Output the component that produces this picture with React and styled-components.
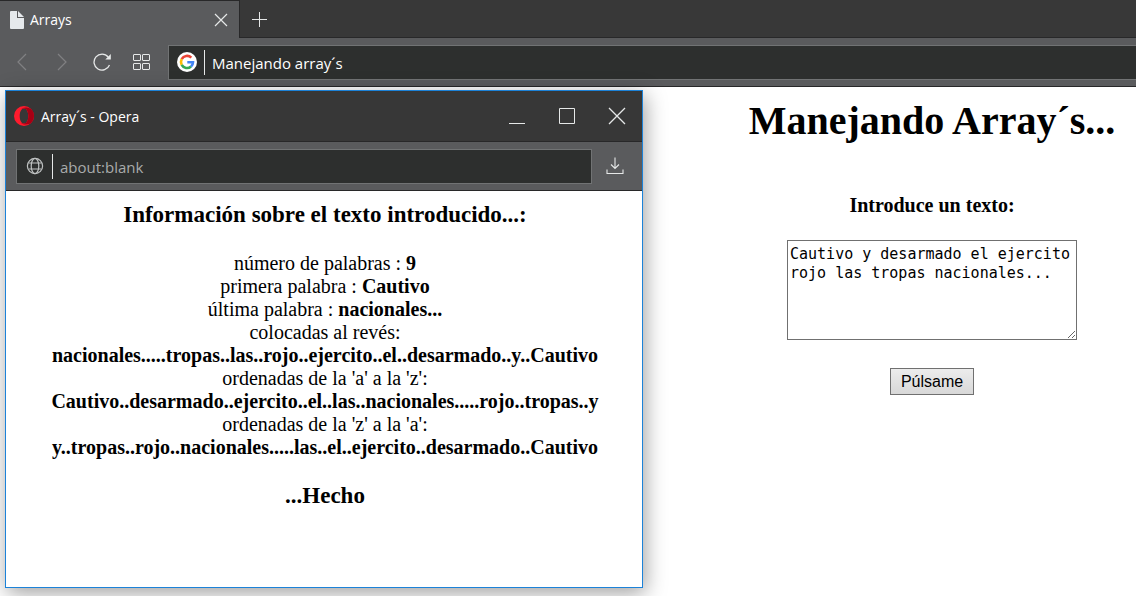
import React, { useState } from 'react';
import styled, { createGlobalStyle } from 'styled-components';

const GlobalStyle = createGlobalStyle`
  * { box-sizing: border-box; }
  body {
    margin: 0;
    background: #fff;
    color: #000;
    font-family: "Liberation Serif", "Times New Roman", serif;
    font-size: 20px;
    line-height: 23px;
  }
`;

const uiFont = '"Open Sans", "Noto Sans", sans-serif';

const Browser = styled.div`
  display: flex;
  flex-direction: column;
  min-height: 100vh;
  overflow: hidden;
`;

const TabStrip = styled.header`
  display: flex;
  height: 38px;
  background: #383838;
  border-bottom: 1px solid #282829;
  font-family: ${uiFont};
`;

const Tab = styled.div`
  display: flex;
  align-items: center;
  gap: 6px;
  width: 240px;
  height: 38px;
  padding: 0 11px 0 10px;
  background: #5a5b5d;
  border-top: 1px solid #282829;
  border-right: 1px solid #282829;
  color: #fff;
  font-size: 14px;
  line-height: 20px;
`;

const TabTitle = styled.span`
  flex: 1;
`;

const IconButton = styled.button`
  display: flex;
  align-items: center;
  justify-content: center;
  flex: none;
  width: ${(p) => p.$width || 20}px;
  height: ${(p) => p.$height || 20}px;
  padding: 0;
  border: 0;
  background: none;
  color: ${(p) => (p.$muted ? '#808183' : '#e6e8e8')};

  svg { display: block; }
`;

const Toolbar = styled.nav`
  display: flex;
  align-items: center;
  height: ${(p) => p.$height}px;
  padding-left: ${(p) => (p.$popup ? 10 : 2)}px;
  padding-right: ${(p) => (p.$popup ? 4 : 0)}px;
  background: #5a5b5d;
  border-bottom: 1px solid #282829;
`;

const Address = styled.label`
  display: flex;
  align-items: center;
  flex: 1;
  min-width: 0;
  height: 35px;
  margin-left: ${(p) => (p.$popup ? 0 : 6)}px;
  padding-left: ${(p) => (p.$popup ? 9 : 8)}px;
  background: #2d2f2e;
  border: 1px solid #717374;
  border-right-width: ${(p) => (p.$popup ? 1 : 0)}px;
`;

const AddressInput = styled.input`
  flex: 1;
  min-width: 0;
  height: 25px;
  margin-left: ${(p) => (p.$muted ? 8 : 7)}px;
  padding: 2px 0 0 7px;
  border: 0;
  border-left: 1px solid #e6e8e8;
  outline: 0;
  background: none;
  color: ${(p) => (p.$muted ? '#a9abab' : '#fff')};
  font: 15px/22px ${uiFont};
`;

const Viewport = styled.div`
  display: grid;
  grid-template-columns: minmax(0, 638fr) minmax(0, 408fr);
  column-gap: 85px;
  flex: 1;
  padding: 3px 0 8px 5px;
`;

const Popup = styled.section`
  display: flex;
  flex-direction: column;
  background: #fff;
  border: 1px solid #1c82d8;
  box-shadow: 2px 5px 20px rgba(0, 0, 0, 0.38);
`;

const TitleBar = styled.div`
  display: flex;
  align-items: center;
  height: 51px;
  padding: 0 0 0 8px;
  background: #373737;
  border-bottom: 1px solid #282829;
  color: #fff;
  font: 14px/20px ${uiFont};
`;

const WindowTitle = styled.span`
  flex: 1;
  margin-left: 7px;
  padding-top: 2px;
`;

const Report = styled.div`
  padding: 10px 7px 10px 9px;
  text-align: center;
`;

const ReportHeading = styled.h3`
  margin: 0;
  font-size: 23px;
  line-height: 28px;
`;

const ReportText = styled.p`
  margin: 23px 0;
`;

const Page = styled.main`
  display: flex;
  flex-direction: column;
  align-items: center;
  padding-top: 8px;
`;

const PageTitle = styled.h1`
  margin: 0 0 50px;
  font-size: 40px;
  line-height: 46px;
  white-space: nowrap;
`;

const Form = styled.form`
  display: flex;
  flex-direction: column;
  align-items: center;
`;

const FieldLabel = styled.label`
  margin-bottom: 23px;
  font-size: 20px;
  font-weight: bold;
`;

const TextArea = styled.textarea`
  width: 290px;
  height: 100px;
  margin: 0 0 28px;
  padding: 4px 2px 2px;
  border: 1px solid #707070;
  outline: 0;
  background: #fff;
  color: #000;
  font: 15px/19px "DejaVu Sans Mono", monospace;
`;

const SubmitButton = styled.button`
  height: 27px;
  padding: 0 10px;
  border: 1px solid #707070;
  background: linear-gradient(#ececec, #d8d8d8);
  color: #000;
  font: 16px/20px "Liberation Sans", Arial, sans-serif;
`;

const Line = ({ width, height, children, strokeWidth = 1 }) => (
  <svg width={width} height={height} viewBox={`0 0 ${width} ${height}`} fill="none" stroke="currentColor" strokeWidth={strokeWidth} aria-hidden="true">
    {children}
  </svg>
);

const DocumentIcon = () => (
  <svg width="14" height="18" viewBox="0 0 14 18" fill="#e6e9ec" aria-hidden="true">
    <path d="M1 0h6v7h7v10a1 1 0 0 1-1 1H1a1 1 0 0 1-1-1V1a1 1 0 0 1 1-1z" />
    <path d="M8 0l6 6H8z" />
  </svg>
);
const CloseTabIcon = () => <Line width={14} height={14} strokeWidth={1.2}><path d="M1 1l12 12M13 1L1 13" /></Line>;
const PlusIcon = () => <Line width={15} height={15}><path d="M7.5 0v15M0 7.5h15" /></Line>;
const BackIcon = () => <Line width={10} height={18} strokeWidth={1.2}><path d="M9 1L1 9l8 8" /></Line>;
const ForwardIcon = () => <Line width={10} height={18} strokeWidth={1.2}><path d="M1 1l8 8-8 8" /></Line>;
const ReloadIcon = () => (
  <Line width={18} height={18} strokeWidth={1.3}>
    <path d="M16.500 12A8 8 0 1 1 15.200 4" />
    <path d="M17.800 1v5.500h-5.500z" fill="currentColor" stroke="none" />
  </Line>
);
const SpeedDialIcon = () => (
  <Line width={18} height={16}>
    <rect x=".5" y=".5" width="7" height="6" rx=".5" />
    <rect x="9.500" y=".5" width="7" height="6" rx=".5" />
    <rect x=".5" y="9.500" width="7" height="6" rx=".5" />
    <rect x="9.500" y="9.500" width="7" height="6" rx=".5" />
  </Line>
);
const GoogleIcon = () => (
  <svg width="20" height="20" viewBox="0 0 20 20" fill="none" strokeWidth="2.600" aria-hidden="true">
    <circle cx="10" cy="10" r="10" fill="#fff" />
    <path d="M14.300 5.700A6 6 0 0 0 4.700 7.200" stroke="#ea4335" />
    <path d="M4.700 7.200a6 6 0 0 0 0 5.600" stroke="#fbbc05" />
    <path d="M4.700 12.800a6 6 0 0 0 9.300 1.700" stroke="#34a853" />
    <path d="M14 14.500a6 6 0 0 0 2-4.300H10.300" stroke="#4285f4" />
  </svg>
);
const OperaIcon = () => (
  <svg width="20" height="20" viewBox="0 0 20 20" aria-hidden="true">
    <path fill="#ff1b2d" fillRule="evenodd" d="M10 0a10 10 0 1 0 0 20 10 10 0 0 0 0-20zM10 2.500c2.600 0 4.300 3.200 4.300 7.500s-1.700 7.500-4.300 7.500S5.700 14.300 5.700 10 7.400 2.500 10 2.500z" />
    <path fill="#a70014" d="M6.800 3.600C8 2.200 9.500 1.500 11.200 1.500c2 0 3.900.5 5.500 1.100a10 10 0 0 1 0 14.800c-1.600.7-3.500 1.100-5.500 1.100-1.700 0-3.200-.7-4.400-2.100.9.800 2 1.100 3.200 1.100 2.600 0 4.300-3.200 4.300-7.500S12.600 2.500 10 2.500c-1.200 0-2.300.3-3.200 1.100z" />
  </svg>
);
const GlobeIcon = () => (
  <svg width="18" height="18" viewBox="0 0 18 18" fill="none" stroke="#bfc2c2" strokeWidth="1.200" aria-hidden="true">
    <circle cx="9" cy="9" r="7.600" />
    <ellipse cx="9" cy="9" rx="3.800" ry="7.600" />
    <path d="M2.500 6h13M2.500 12h13" />
  </svg>
);
const MinimizeIcon = () => <Line width={16} height={16}><path d="M0 15.500h16" /></Line>;
const MaximizeIcon = () => <Line width={16} height={16}><path d="M.5.5h15v15H.5z" /></Line>;
const CloseIcon = () => <Line width={18} height={18} strokeWidth={1.3}><path d="M1 1l16 16M17 1L1 17" /></Line>;
const DownloadIcon = () => (
  <Line width={18} height={18} strokeWidth={1.1}>
    <path d="M9 .5v11M5 7.500l4 4 4-4M1 12.500v4h16v-4" />
  </Line>
);

const results = [
  ['número de palabras : ', '9'],
  ['primera palabra : ', 'Cautivo'],
  ['última palabra : ', 'nacionales...'],
  ['colocadas al revés:', 'nacionales.....tropas..las..rojo..ejercito..el..desarmado..y..Cautivo', true],
  ["ordenadas de la 'a' a la 'z':", 'Cautivo..desarmado..ejercito..el..las..nacionales.....rojo..tropas..y', true],
  ["ordenadas de la 'z' a la 'a':", 'y..tropas..rojo..nacionales.....las..el..ejercito..desarmado..Cautivo', true],
];

export default function App() {
  const [text, setText] = useState('Cautivo y desarmado el ejercito rojo las tropas nacionales...');

  return (
    <Browser>
      <GlobalStyle />
      <TabStrip>
        <Tab>
          <DocumentIcon />
          <TabTitle>Arrays</TabTitle>
          <IconButton $width={14} aria-label="Cerrar pestaña"><CloseTabIcon /></IconButton>
        </Tab>
        <IconButton $width={38} $height={38} aria-label="Nueva pestaña"><PlusIcon /></IconButton>
      </TabStrip>
      <Toolbar $height={49}>
        <IconButton $width={40} $muted aria-label="Atrás"><BackIcon /></IconButton>
        <IconButton $width={40} $muted aria-label="Adelante"><ForwardIcon /></IconButton>
        <IconButton $width={40} aria-label="Recargar"><ReloadIcon /></IconButton>
        <IconButton $width={40} aria-label="Acceso rápido"><SpeedDialIcon /></IconButton>
        <Address>
          <GoogleIcon />
          <AddressInput aria-label="Dirección" defaultValue="Manejando array´s" />
        </Address>
      </Toolbar>

      <Viewport>
        <Popup>
          <TitleBar>
            <OperaIcon />
            <WindowTitle>Array´s - Opera</WindowTitle>
            <IconButton $width={50} aria-label="Minimizar"><MinimizeIcon /></IconButton>
            <IconButton $width={50} aria-label="Maximizar"><MaximizeIcon /></IconButton>
            <IconButton $width={50} aria-label="Cerrar"><CloseIcon /></IconButton>
          </TitleBar>
          <Toolbar $height={49} $popup>
            <Address $popup>
              <GlobeIcon />
              <AddressInput $muted aria-label="Dirección de la ventana" defaultValue="about:blank" />
            </Address>
            <IconButton $width={46} aria-label="Descargas"><DownloadIcon /></IconButton>
          </Toolbar>
          <Report>
            <ReportHeading>Información sobre el texto introducido...:</ReportHeading>
            <ReportText>
              {results.map(([label, value, wrap]) => (
                <React.Fragment key={label}>
                  {label}
                  {wrap && <br />}
                  <b>{value}</b>
                  <br />
                </React.Fragment>
              ))}
            </ReportText>
            <ReportHeading>...Hecho</ReportHeading>
          </Report>
        </Popup>

        <Page>
          <PageTitle>Manejando Array´s...</PageTitle>
          <Form onSubmit={(e) => e.preventDefault()}>
            <FieldLabel htmlFor="texto">Introduce un texto:</FieldLabel>
            <TextArea id="texto" spellCheck={false} value={text} onChange={(e) => setText(e.target.value)} />
            <SubmitButton type="submit">Púlsame</SubmitButton>
          </Form>
        </Page>
      </Viewport>
    </Browser>
  );
}
